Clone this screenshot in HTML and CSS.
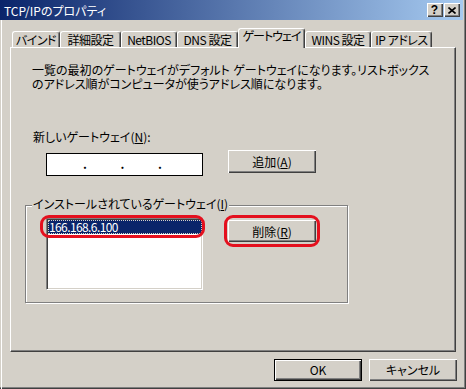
FILE: index.html
```html
<!DOCTYPE html>
<html lang="ja">
<head>
<meta charset="utf-8">
<title>TCP/IPのプロパティ</title>
<link rel="stylesheet" href="styles.css">
</head>
<body>
<div class="window">
  <div class="titlebar">
    <span class="title">TCP/IPのプロパティ</span>
    <div class="tb-buttons">
      <span class="tb-btn help">?</span>
      <span class="tb-btn close"><svg width="8" height="7" viewBox="0 0 8 7"><path d="M0.5 0.5 L7.5 6.5 M7.5 0.5 L0.5 6.5" stroke="#000" stroke-width="1.6" fill="none"/></svg></span>
    </div>
  </div>
  <div class="client">
    <div class="tabs">
      <div class="tab t1">バインド</div>
      <div class="tab t2">詳細設定</div>
      <div class="tab t3">NetBIOS</div>
      <div class="tab t4">DNS 設定</div>
      <div class="tab t5 active">ゲートウェイ</div>
      <div class="tab t6">WINS 設定</div>
      <div class="tab t7">IP アドレス</div>
    </div>
    <div class="panel">
      <p class="desc">一覧の最初のゲートウェイがデフォルト ゲートウェイになります。リストボックス<br>のアドレス順がコンピュータが使うアドレス順になります。</p>
      <p class="label">新しいゲートウェイ(<u>N</u>):</p>
      <div class="row">
        <div class="ipbox"><span class="dot">.</span><span class="dot">.</span><span class="dot">.</span></div>
        <button class="btn">追加(<u>A</u>)</button>
      </div>
      <div class="group">
        <span class="legend">インストールされているゲートウェイ(<u>I</u>)</span>
        <div class="listbox">
          <div class="item selected">166.168.6.100</div>
        </div>
        <button class="btn del">削除(<u>R</u>)</button>
      </div>
    </div>
    <div class="footer">
      <button class="btn default">OK</button>
      <button class="btn">キャンセル</button>
    </div>
  </div>
</div>
</body>
</html>
```
FILE: styles.css
```css
html, body {
  margin: 0;
  padding: 0;
}
body {
  background: #d4d0c8;
  font-family: "Noto Sans CJK JP", "Noto Sans", sans-serif;
  font-size: 12px;
  font-feature-settings: "palt";
  color: #000;
}
.window {
  width: 466px;
  height: 389px;
  box-sizing: border-box;
  background: #d4d0c8;
  display: flex;
  flex-direction: column;
  box-shadow: inset -1px -1px #404040, inset -2px -2px #808080;
}
.titlebar {
  height: 20px;
  flex: none;
  display: flex;
  align-items: flex-start;
  justify-content: space-between;
  background: linear-gradient(to right, #0a246a, #a6caf0);
  margin-right: 3px;
}
.title {
  color: #fff;
  padding-left: 4px;
  line-height: 22px;
  white-space: nowrap;
}
.tb-buttons {
  display: flex;
  gap: 1px;
  margin-top: 3px;
  margin-right: 3px;
}
.tb-btn {
  width: 16px;
  height: 14px;
  box-sizing: border-box;
  background: #d4d0c8;
  box-shadow: inset 1px 1px #fff, inset -1px -1px #404040, inset -2px -2px #808080;
  display: flex;
  align-items: center;
  justify-content: center;
}
.help {
  font-family: "Liberation Sans", sans-serif;
  font-weight: bold;
  font-size: 12px;
  line-height: 14px;
  padding-right: 1px;
}
.close svg {
  display: block;
  margin-right: 1px;
}
.client {
  flex: 1;
  margin-left: 1px;
  border-left: 1px solid #fff;
  display: flex;
  flex-direction: column;
}
.tabs {
  display: flex;
  align-items: flex-end;
  height: 19px;
  margin: 8px 0 0 8px;
  padding-left: 2px;
  position: relative;
  z-index: 1;
}
.tab {
  height: 16px;
  box-sizing: border-box;
  border-left: 1px solid #fff;
  border-top: 1px solid #fff;
  border-right: 1px solid #404040;
  box-shadow: inset -1px 0 #808080;
  border-radius: 3px 3px 0 0;
  text-align: center;
  line-height: 15px;
  white-space: nowrap;
  background: #d4d0c8;
  letter-spacing: -0.5px;
}
.tab.active {
  height: 20px;
  margin-bottom: -1px;
  line-height: 13px;
  letter-spacing: -1px;
}
.t1 { width: 48px; }
.t2 { width: 61px; }
.t3 { width: 56px; }
.t4 { width: 61px; }
.t5 { width: 67px; }
.t6 { width: 66px; }
.t7 { width: 61px; }
.panel {
  margin-left: 8px;
  width: 446px;
  height: 305px;
  box-sizing: border-box;
  border-left: 1px solid #fff;
  border-top: 1px solid #fff;
  border-right: 1px solid #404040;
  border-bottom: 1px solid #404040;
  box-shadow: inset -1px -1px #808080;
  display: flex;
  flex-direction: column;
  align-items: flex-start;
}
.desc {
  margin: 17px 0 0 21px;
  font-family: "Liberation Sans", "Noto Sans CJK JP", sans-serif;
  line-height: 13.5px;
  white-space: nowrap;
}
.label {
  margin: 39px 0 0 22px;
  line-height: 12px;
  white-space: nowrap;
}
.row {
  margin: 7px 0 0 35px;
  display: flex;
  align-items: flex-start;
  gap: 25px;
}
.ipbox {
  margin-top: 3px;
  width: 157px;
  height: 23px;
  box-sizing: border-box;
  border: 1px solid #000;
  background: #fff;
  display: flex;
  justify-content: space-between;
  padding: 0 40px 0 36px;
  line-height: 20px;
  font-weight: bold;
}
.btn {
  width: 88px;
  height: 23px;
  padding: 0;
  margin: 0;
  border: none;
  background: #d4d0c8;
  box-shadow: inset 1px 1px #fff, inset -1px -1px #404040, inset -2px -2px #808080;
  font: inherit;
  color: #000;
  line-height: 21px;
}
.group {
  position: relative;
  margin: 29px 0 0 14px;
  width: 323px;
  height: 98px;
  box-sizing: border-box;
  border: 1px solid #808080;
  box-shadow: 1px 1px #fff, inset 1px 1px #fff;
  padding: 12px 0 0 20px;
  display: flex;
  align-items: flex-start;
  gap: 25px;
}
.legend {
  position: absolute;
  left: 6px;
  top: -8px;
  padding: 0 1px;
  background: #d4d0c8;
  line-height: 12px;
  white-space: nowrap;
}
.listbox {
  width: 157px;
  height: 72px;
  box-sizing: border-box;
  background: #fff;
  border-top: 1px solid #808080;
  border-left: 1px solid #808080;
  border-right: 1px solid #fff;
  border-bottom: 1px solid #fff;
  box-shadow: inset 1px 1px #404040, inset -1px -1px #d4d0c8;
  padding: 1px 0 0 1px;
}
.item {
  position: relative;
  height: 14px;
  line-height: 14px;
  padding-left: 1px;
  width: 154px;
  box-sizing: border-box;
  letter-spacing: -0.6px;
}
.item.selected {
  background: #0a246a;
  color: #fff;
  outline: 1px dotted #d4d0c8;
  outline-offset: -1px;
}
.item.selected::after {
  content: "";
  position: absolute;
  left: -8px;
  right: -3px;
  top: -5px;
  bottom: -4px;
  border: 3px solid #e4101e;
  border-radius: 9px;
}
.btn.del {
  position: relative;
  margin-top: 2px;
  height: 22px;
}
.btn.del::after {
  content: "";
  position: absolute;
  left: -4px;
  right: -4px;
  top: -5px;
  bottom: -5px;
  border: 3px solid #e4101e;
  border-radius: 9px;
}
.footer {
  display: flex;
  justify-content: flex-end;
  gap: 7px;
  margin: 7px 9px 0 0;
}
.footer .btn {
  height: 22px;
  line-height: 20px;
}
.btn.default {
  border: 1px solid #000;
  box-shadow: inset 1px 1px #fff, inset -1px -1px #404040, inset -2px -2px #808080;
}
```
